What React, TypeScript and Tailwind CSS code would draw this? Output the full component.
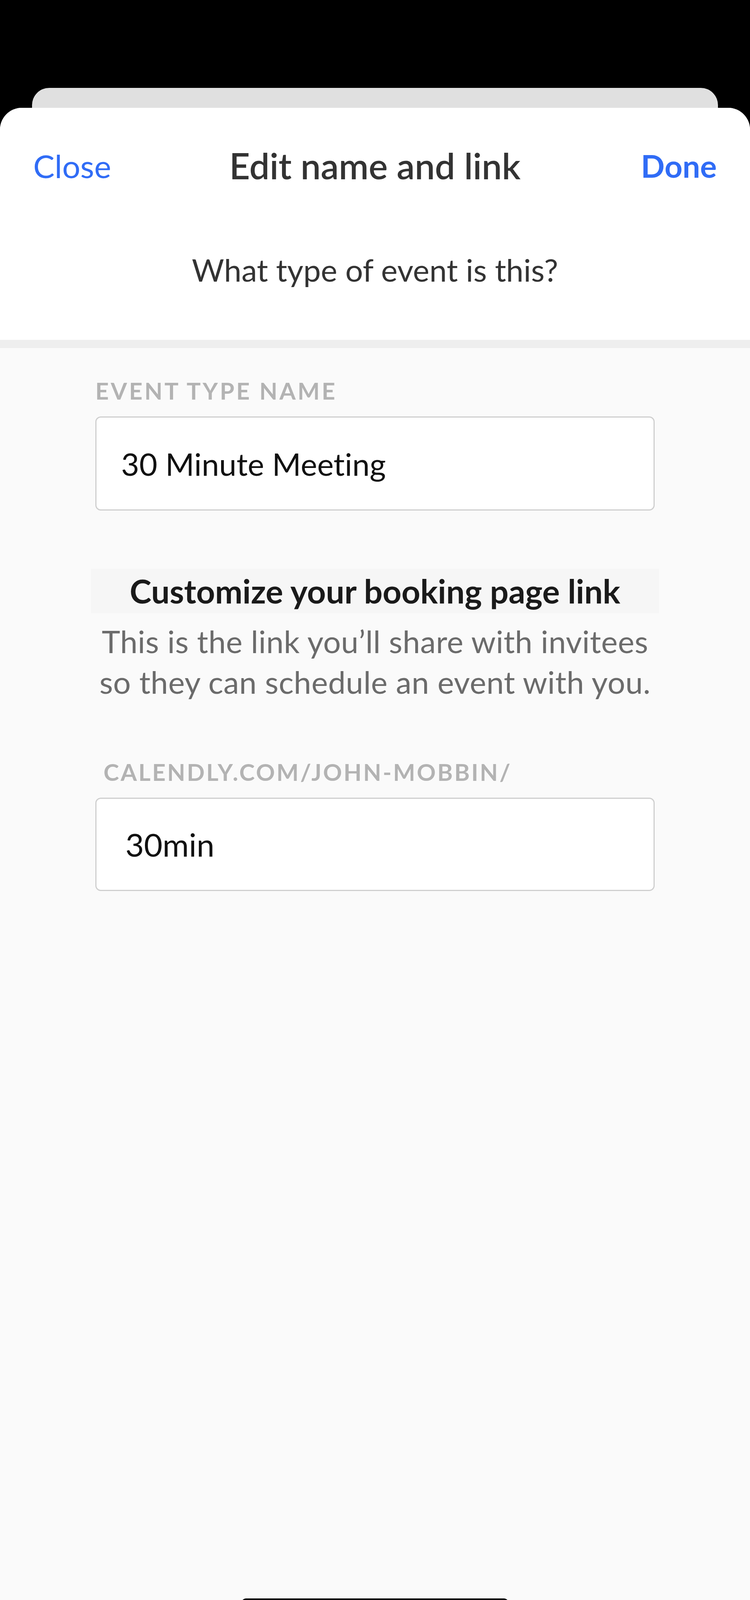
export default function App() {
  return (
    <div
      className="relative flex h-[4157px] w-[1920px] flex-col overflow-hidden bg-black [font-variant-ligatures:none]"
      style={{ fontFamily: "Lato, 'Liberation Sans', sans-serif" }}
    >
      {/* card behind the sheet */}
      <div className="mx-[82px] mt-[225px] h-[51px] shrink-0 rounded-t-[44px] bg-[#e0e0e0]" />

      {/* sheet */}
      <div className="flex flex-1 flex-col overflow-hidden rounded-t-[56px] bg-[#fafafa]">
        <div className="flex h-[594px] shrink-0 flex-col bg-white">
          <div className="mt-[100px] flex h-[96px] items-center justify-between px-[85px]">
            <button className="w-[200px] text-left text-[82px] leading-none text-[#306cf6]">Close</button>
            <h1 className="text-[92px] font-semibold leading-none text-[#333333]">Edit name and link</h1>
            <button className="w-[200px] text-right text-[80px] font-bold leading-none text-[#306cf6]">Done</button>
          </div>
          <p className="mt-[170px] text-center text-[80px] leading-[96px] text-[#333333]">
            What type of event is this?
          </p>
        </div>
        <div className="h-[21px] shrink-0 bg-[#eeeeee]" />

        <div className="mx-[244px] flex flex-col">
          <label className="mt-[74px] text-[60px] font-bold uppercase leading-[70px] tracking-[5px] text-[#b3b3b3]">
            Event type name
          </label>
          <div className="mt-[31px] flex h-[241px] items-center rounded-[14px] border-[3px] border-[#cfcfcf] bg-white pl-[63px] text-[80px] text-[#111111]">
            30 Minute Meeting
          </div>

          <h2 className="mx-[-11px] mt-[149px] h-[114px] bg-[#f6f6f6] text-center text-[84px] font-bold leading-[114px] text-[#1a1a1a]">
            Customize your booking page link
          </h2>
          <p className="mt-[19px] whitespace-nowrap text-center text-[80px] leading-[104px] tracking-[0.5px] text-[#6b6b6b]">
            This is the link you’ll share with invitees
            <br />
            so they can schedule an event with you.
          </p>

          <label className="mt-[144px] pl-[21px] text-[60px] font-bold uppercase leading-[70px] tracking-[4px] text-[#b3b3b3]">
            calendly.com/john-mobbin/
          </label>
          <div className="mt-[31px] flex h-[239px] items-center rounded-[14px] border-[3px] border-[#cfcfcf] bg-white pl-[74px] text-[82px] text-[#111111]">
            30min
          </div>
        </div>

        <div className="mx-auto mb-[41px] mt-auto h-[24px] w-[684px] shrink-0 rounded-full bg-black" />
      </div>
    </div>
  );
}
